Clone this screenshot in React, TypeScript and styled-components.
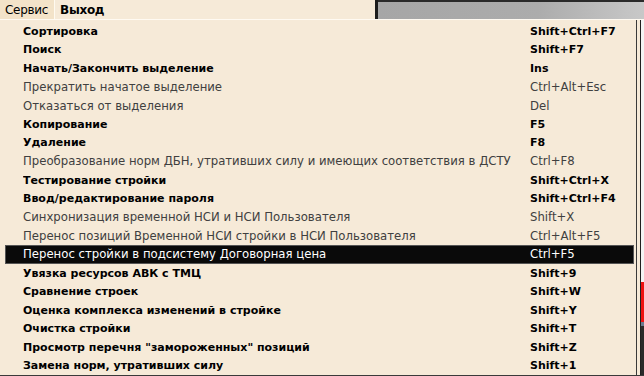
import styled, { createGlobalStyle } from "styled-components";

const GlobalStyle = createGlobalStyle`
  html, body {
    margin: 0;
    padding: 0;
    background: #f6ead8;
  }
  * {
    box-sizing: border-box;
  }
`;

interface MenuEntry {
  label: string;
  shortcut: string;
  bold?: boolean;
  active?: boolean;
}

const entries: MenuEntry[] = [
  { label: "Сортировка", shortcut: "Shift+Ctrl+F7", bold: true },
  { label: "Поиск", shortcut: "Shift+F7", bold: true },
  { label: "Начать/Закончить выделение", shortcut: "Ins", bold: true },
  { label: "Прекратить начатое выделение", shortcut: "Ctrl+Alt+Esc" },
  { label: "Отказаться от выделения", shortcut: "Del" },
  { label: "Копирование", shortcut: "F5", bold: true },
  { label: "Удаление", shortcut: "F8", bold: true },
  {
    label:
      "Преобразование норм ДБН, утративших силу и имеющих соответствия в ДСТУ",
    shortcut: "Ctrl+F8",
  },
  { label: "Тестирование стройки", shortcut: "Shift+Ctrl+X", bold: true },
  { label: "Ввод/редактирование пароля", shortcut: "Shift+Ctrl+F4", bold: true },
  {
    label: "Синхронизация временной НСИ и НСИ Пользователя",
    shortcut: "Shift+X",
  },
  {
    label: "Перенос позиций Временной НСИ стройки в НСИ Пользователя",
    shortcut: "Ctrl+Alt+F5",
  },
  {
    label: "Перенос стройки в подсистему Договорная цена",
    shortcut: "Ctrl+F5",
    active: true,
  },
  { label: "Увязка ресурсов АВК с ТМЦ", shortcut: "Shift+9", bold: true },
  { label: "Сравнение строек", shortcut: "Shift+W", bold: true },
  {
    label: "Оценка комплекса изменений в стройке",
    shortcut: "Shift+Y",
    bold: true,
  },
  { label: "Очистка стройки", shortcut: "Shift+T", bold: true },
  {
    label: "Просмотр перечня \"замороженных\" позиций",
    shortcut: "Shift+Z",
    bold: true,
  },
  { label: "Замена норм, утративших силу", shortcut: "Shift+1", bold: true },
];

const Screen = styled.div`
  width: 644px;
  height: 376px;
  overflow: hidden;
  display: flex;
  flex-direction: column;
  background: #f6ead8;
  font-family: "DejaVu Sans", Verdana, sans-serif;
  font-size: 11px;
`;

const TopRow = styled.div`
  display: flex;
  height: 19px;
  flex-shrink: 0;
`;

const MenuBar = styled.div`
  width: 375px;
  display: flex;
  align-items: stretch;
  background: #f6ead8;
`;

const BarItem = styled.div<{ $open?: boolean }>`
  display: flex;
  align-items: center;
  padding: 0 6px 0 5px;
  color: #000;
  font-size: 12px;
  font-weight: ${(p) => (p.$open ? 400 : 700)};
  background: ${(p) => (p.$open ? "#f3e3c9" : "transparent")};
  border-right: ${(p) => (p.$open ? "1px solid #fffaf0" : "none")};
  letter-spacing: -0.3px;
`;

const WindowEdge = styled.div`
  width: 3px;
  background: #1c1c1c;
`;

const BackWindow = styled.div`
  flex: 1;
  border-top: 2px solid #2a2a2a;
  background: linear-gradient(90deg, #a6a6a6 0%, #acacac 60%, #c8c8c8 100%);
`;

const Middle = styled.div`
  flex: 1;
  display: flex;
  border-top: 1px solid #fffaf2;
`;

const Dropdown = styled.div`
  width: 634px;
  margin-left: 3px;
  padding-top: 2px;
  border-right: 1px solid #3a3a3a;
  display: flex;
  flex-direction: column;
`;

const Row = styled.div<{ $bold?: boolean; $active?: boolean }>`
  height: 18.6px;
  margin: 0 2px;
  display: grid;
  grid-template-columns: 1fr 103px;
  align-items: center;
  padding-left: 17px;
  white-space: nowrap;
  font-size: ${(p) => (p.$bold ? "11px" : "11.7px")};
  font-weight: ${(p) => (p.$bold ? 700 : 400)};
  color: ${(p) => (p.$active ? "#ffffff" : p.$bold ? "#000000" : "#404040")};
  background: ${(p) => (p.$active ? "#0a0a0a" : "transparent")};
  border: 1px solid ${(p) => (p.$active ? "#555" : "transparent")};
`;

const Label = styled.span`
  overflow: hidden;
`;

const Shortcut = styled.span``;

const Outside = styled.div`
  flex: 1;
  display: flex;
  padding-left: 3px;
  background: #f6ead8;
`;

const OutsideWindow = styled.div`
  flex: 1;
  display: flex;
  flex-direction: column;
  border-left: 1px solid #202020;
  background: #2a2a2a;
`;

const OutsidePart = styled.div<{ $h: number; $color: string }>`
  height: ${(p) => p.$h}px;
  background: ${(p) => p.$color};
`;

const BottomEdge = styled.div`
  height: 3px;
  flex-shrink: 0;
  background: #3a3a3a;
`;

export default function App() {
  return (
    <>
      <GlobalStyle />
      <Screen>
        <TopRow>
          <MenuBar>
            <BarItem $open>Сервис</BarItem>
            <BarItem>Выход</BarItem>
          </MenuBar>
          <WindowEdge />
          <BackWindow />
        </TopRow>
        <Middle>
          <Dropdown>
            {entries.map((e) => (
              <Row key={e.label} $bold={e.bold} $active={e.active}>
                <Label>{e.label}</Label>
                <Shortcut>{e.shortcut}</Shortcut>
              </Row>
            ))}
          </Dropdown>
          <Outside>
            <OutsideWindow>
              <OutsidePart $h={262} $color="#f4f4f4" />
              <OutsidePart $h={40} $color="#ee1111" />
              <OutsidePart $h={4} $color="#6a7a90" />
            </OutsideWindow>
          </Outside>
        </Middle>
        <BottomEdge />
      </Screen>
    </>
  );
}
